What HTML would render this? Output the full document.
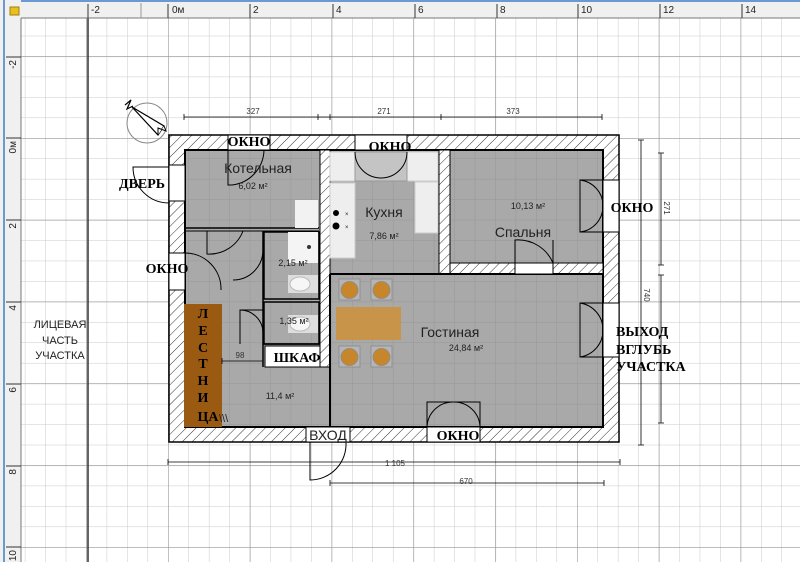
<!DOCTYPE html>
<html><head><meta charset="utf-8"><style>
html,body{margin:0;padding:0;background:#fff;}
svg{display:block;}
.b{font-family:"Liberation Serif","DejaVu Serif",serif;font-weight:bold;font-size:14px;fill:#000;}
.s{font-family:"Liberation Sans","DejaVu Sans",sans-serif;fill:#222;}
.d{font-family:"Liberation Sans",sans-serif;font-size:8px;fill:#333;}
</style></head><body>
<svg width="800" height="562" viewBox="0 0 800 562" xmlns="http://www.w3.org/2000/svg">
<defs>
<pattern id="g" x="168" y="138" width="20.45" height="20.45" patternUnits="userSpaceOnUse">
<path d="M0 0H20.45M0 0V20.45" stroke="#cacaca" stroke-width="1" fill="none"/>
</pattern>
<pattern id="G" x="168" y="138" width="81.8" height="81.8" patternUnits="userSpaceOnUse">
<path d="M0 0H81.8M0 0V81.8" stroke="#959595" stroke-width="1.2" fill="none"/>
</pattern>
<pattern id="h" width="7" height="7" patternUnits="userSpaceOnUse" patternTransform="rotate(45)">
<rect width="7" height="7" fill="#fff"/><path d="M0 0V7" stroke="#333" stroke-width="1"/>
</pattern>
<pattern id="fg" x="168" y="138" width="20.45" height="20.45" patternUnits="userSpaceOnUse">
<rect width="20.45" height="20.45" fill="#a9a9a9"/>
<path d="M0 0H20.45M0 0V20.45" stroke="#979797" stroke-width="1" fill="none"/>
</pattern>
</defs>
<rect width="800" height="562" fill="#fff"/>
<rect x="20" y="18" width="780" height="544" fill="url(#g)"/>
<rect x="20" y="18" width="780" height="544" fill="url(#G)"/>
<line x1="88" y1="18" x2="88" y2="562" stroke="#333" stroke-width="1.5"/>

<rect x="169" y="135" width="450" height="307" fill="url(#h)" stroke="#000" stroke-width="1.5"/>
<rect x="185" y="150" width="418" height="277" fill="url(#fg)" stroke="#000" stroke-width="2"/>
<rect x="320" y="150" width="10" height="217" fill="url(#h)" stroke="#000" stroke-width="1"/>
<rect x="439" y="150" width="11" height="124" fill="url(#h)" stroke="#000" stroke-width="1"/>
<rect x="450" y="263" width="153" height="11" fill="url(#h)" stroke="#000" stroke-width="1"/>
<line x1="330" y1="274" x2="603" y2="274" stroke="#000" stroke-width="2"/>
<line x1="330" y1="274" x2="330" y2="427" stroke="#000" stroke-width="2"/>
<line x1="185" y1="228" x2="319" y2="228" stroke="#000" stroke-width="1.5"/>
<line x1="185" y1="231" x2="319" y2="231" stroke="#000" stroke-width="1"/>
<line x1="263" y1="231" x2="263" y2="367" stroke="#000" stroke-width="1.5"/>
<rect x="264" y="232" width="55" height="67" fill="none" stroke="#000" stroke-width="1.5"/>
<rect x="264" y="302" width="55" height="42" fill="none" stroke="#000" stroke-width="1.5"/>
<line x1="263" y1="344" x2="320" y2="344" stroke="#000" stroke-width="1.5"/>
<rect x="295" y="200" width="23" height="28" fill="#f2f2f2"/>
<rect x="288" y="232" width="30" height="31" fill="#f4f4f4"/>
<circle cx="309" cy="247" r="2" fill="#333"/>
<rect x="288" y="275" width="30" height="18" fill="#ddd"/>
<ellipse cx="300" cy="284" rx="10" ry="7" fill="#f6f6f6" stroke="#bbb"/>
<rect x="288" y="315" width="30" height="18" fill="#ddd"/>
<ellipse cx="300" cy="324" rx="10" ry="7" fill="#f6f6f6" stroke="#bbb"/>
<rect x="265" y="346" width="55" height="21" fill="#fff" stroke="#000"/>
<rect x="330" y="152" width="25" height="29" fill="#eee" stroke="#ccc"/>
<rect x="407" y="152" width="31" height="29" fill="#eee" stroke="#ccc"/>
<rect x="355" y="152" width="52" height="29" fill="#c4c4c4" stroke="#999"/>
<rect x="330" y="183" width="25" height="75" fill="#eee" stroke="#ccc"/>
<rect x="415" y="182" width="23" height="51" fill="#eee" stroke="#ccc"/>
<circle cx="336" cy="213" r="3" fill="#000"/><circle cx="336" cy="226" r="3.5" fill="#000"/>
<text x="345" y="216" class="s" font-size="6" fill="#999">×</text><text x="345" y="229" class="s" font-size="6" fill="#999">×</text>
<rect x="336" y="307" width="65" height="33" fill="#c8944a"/>
<g fill="#c8862a" stroke="#8a8a8a" stroke-width="0.8">
<rect x="339" y="279" width="21" height="21" fill="#b5b5b5"/><circle cx="349.5" cy="290" r="8.5"/>
<rect x="371" y="279" width="21" height="21" fill="#b5b5b5"/><circle cx="381.5" cy="290" r="8.5"/>
<rect x="339" y="346" width="21" height="21" fill="#b5b5b5"/><circle cx="349.5" cy="357" r="8.5"/>
<rect x="371" y="346" width="21" height="21" fill="#b5b5b5"/><circle cx="381.5" cy="357" r="8.5"/>
</g>
<rect x="184" y="304" width="38" height="123" fill="#9b5a12"/>
<g fill="#fff" stroke="#000" stroke-width="1">
<rect x="228" y="135" width="42" height="15"/>
<rect x="355" y="135" width="52" height="15"/>
<rect x="603" y="180" width="16" height="52"/>
<rect x="603" y="303" width="16" height="54"/>
<rect x="427" y="427" width="53" height="15"/>
<rect x="306" y="427" width="44" height="15"/>
<rect x="515" y="263" width="38" height="11"/>
<rect x="169" y="165" width="16" height="36"/>
<rect x="169" y="253" width="16" height="37"/>
</g>
<g fill="none" stroke="#000" stroke-width="1">
<path d="M228 150V185H232A36 36 0 0 0 264 150"/>
<path d="M355 152A26 26 0 0 0 381 178M407 152A26 26 0 0 1 381 178"/>
<path d="M603 180H580V232H603M580 180A26 26 0 0 1 603 206M580 232A26 26 0 0 0 603 206"/>
<path d="M603 303H580V357H603M580 303A27 27 0 0 1 603 330M580 357A27 27 0 0 0 603 330"/>
<path d="M427 427V402H453A26 26 0 0 0 427 427M480 427V402H453A26 26 0 0 1 480 427"/>
<path d="M310 442V480A36 36 0 0 0 346 442"/>
<path d="M515 263V240A38 38 0 0 1 553 263V240"/>
<path d="M169 167H133A36 36 0 0 0 169 203"/>
<path d="M185 253A36 36 0 0 1 221 290"/>
<path d="M207 231V254A36 36 0 0 0 243 231"/>
<path d="M263 250A30 30 0 0 1 233 280"/>
<path d="M263 310H240V344M240 310A23 23 0 0 1 263 333"/>
</g>
<g stroke="#000" stroke-width="0.8" fill="none">
<path d="M184 117H602M184 114V120M318 114V120M330 114V120M441 114V120M602 114V120"/>
<path d="M168 462H620M168 459V465M620 459V465"/>
<path d="M330 483H604M330 480V486M604 480V486"/>
<path d="M641 140V445M638 140H644M638 445H644"/>
<path d="M661 153V265M661 275V423M658 153H664M658 265H664M658 275H664M658 423H664"/>
<path d="M222 361H263M222 358V364M263 358V364"/>
</g>
<text x="253" y="114" class="d" text-anchor="middle">327</text>
<text x="384" y="114" class="d" text-anchor="middle">271</text>
<text x="513" y="114" class="d" text-anchor="middle">373</text>
<text x="395" y="466" class="d" text-anchor="middle">1 105</text>
<text x="466" y="484" class="d" text-anchor="middle">670</text>
<text x="240" y="358" class="d" text-anchor="middle">98</text>
<text transform="translate(664,208) rotate(90)" class="d" text-anchor="middle">271</text>
<text transform="translate(644,295) rotate(90)" class="d" text-anchor="middle">740</text>
<g stroke="#000" fill="none">
<circle cx="147" cy="123" r="20" stroke="#888"/>
<path d="M132 107L158 135L164 126Z" fill="#fff" stroke-width="1.2"/>
<path d="M158 135L158 128L166 131L164 126" fill="#fff"/>
<path d="M125 105L131 100L127 109L133 106" stroke-width="1.2"/>
</g>
<text x="258" y="173" class="s" font-size="14" text-anchor="middle">Котельная</text>
<text x="253" y="189" class="s" font-size="9" text-anchor="middle">6,02 м²</text>
<text x="384" y="217" class="s" font-size="14" text-anchor="middle">Кухня</text>
<text x="384" y="239" class="s" font-size="9" text-anchor="middle">7,86 м²</text>
<text x="528" y="209" class="s" font-size="9" text-anchor="middle">10,13 м²</text>
<text x="523" y="237" class="s" font-size="14" text-anchor="middle">Спальня</text>
<text x="450" y="337" class="s" font-size="14" text-anchor="middle">Гостиная</text>
<text x="466" y="351" class="s" font-size="9" text-anchor="middle">24,84 м²</text>
<text x="293" y="266" class="s" font-size="9" text-anchor="middle">2,15 м²</text>
<text x="294" y="324" class="s" font-size="9" text-anchor="middle">1,35 м²</text>
<text x="280" y="399" class="s" font-size="9" text-anchor="middle">11,4 м²</text>
<text x="249" y="146" class="b" text-anchor="middle">ОКНО</text>
<text x="390" y="151" class="b" text-anchor="middle">ОКНО</text>
<text x="632" y="212" class="b" text-anchor="middle">ОКНО</text>
<text x="167" y="273" class="b" text-anchor="middle">ОКНО</text>
<text x="458" y="440" class="b" text-anchor="middle">ОКНО</text>
<text x="142" y="188" class="b" text-anchor="middle">ДВЕРЬ</text>
<text x="297" y="362" class="b" text-anchor="middle">ШКАФ</text>
<text x="328" y="440" class="s" font-size="14" text-anchor="middle" fill="#000">ВХОД</text>
<text x="616" y="336" class="b">ВЫХОД</text>
<text x="616" y="354" class="b">ВГЛУБЬ</text>
<text x="616" y="371" class="b">УЧАСТКА</text>
<g class="b" text-anchor="middle" font-size="13">
<text x="203" y="318">Л</text><text x="203" y="335">Е</text><text x="203" y="352">С</text><text x="203" y="368">Т</text><text x="203" y="385">Н</text><text x="203" y="402">И</text><text x="208" y="421">ЦА</text>
</g>
<text x="219" y="422" class="s" font-size="11" fill="#333">\\\</text>
<g class="s" font-size="11" fill="#a03828" text-anchor="middle">
<text x="60" y="328">ЛИЦЕВАЯ</text><text x="60" y="344">ЧАСТЬ</text><text x="60" y="359">УЧАСТКА</text>
</g>
<rect x="0" y="0" width="800" height="18" fill="#f0f0f0"/>
<line x1="0" y1="18" x2="800" y2="18" stroke="#777"/>
<rect x="0" y="0" width="800" height="2" fill="#6a9ad0"/>
<rect x="0" y="0" width="21" height="562" fill="#f0f0f0"/>
<line x1="21" y1="18" x2="21" y2="562" stroke="#777"/>
<rect x="3" y="0" width="2" height="562" fill="#6a9ad0"/>
<rect x="10" y="7" width="9" height="8" fill="#e8c020" stroke="#a08010"/>
<g stroke="#333" stroke-width="1">
<path d="M88 4V18M168 4V18M250 4V18M333 4V18M415 4V18M497 4V18M578 4V18M660 4V18M742 4V18"/>
<path d="M6 57H21M6 138H21M6 220H21M6 302H21M6 384H21M6 466H21M6 547H21"/>
</g>
<g stroke="#999"><path d="M141 3V18"/></g>
<g class="s" font-size="10" fill="#000">
<text x="91" y="13">-2</text><text x="172" y="13">0м</text><text x="253" y="13">2</text><text x="336" y="13">4</text><text x="418" y="13">6</text><text x="500" y="13">8</text><text x="581" y="13">10</text><text x="663" y="13">12</text><text x="745" y="13">14</text>
<text transform="translate(16,60) rotate(-90)" text-anchor="end">-2</text>
<text transform="translate(16,141) rotate(-90)" text-anchor="end">0м</text>
<text transform="translate(16,223) rotate(-90)" text-anchor="end">2</text>
<text transform="translate(16,305) rotate(-90)" text-anchor="end">4</text>
<text transform="translate(16,387) rotate(-90)" text-anchor="end">6</text>
<text transform="translate(16,469) rotate(-90)" text-anchor="end">8</text>
<text transform="translate(16,550) rotate(-90)" text-anchor="end">10</text>
</g>
</svg>
</body></html>
